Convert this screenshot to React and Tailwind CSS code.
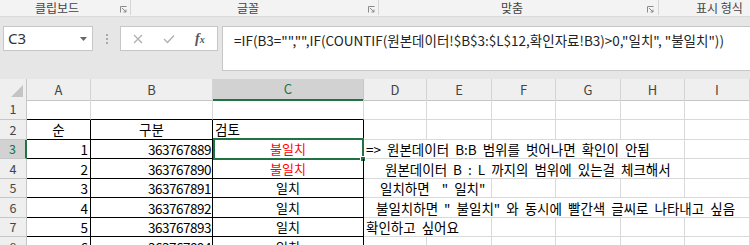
import React from "react";

const FONT = { fontFamily: '"Noto Sans CJK KR", "Noto Sans", sans-serif' };

function Launcher() {
  return (
    <svg width="7" height="7" viewBox="0 0 7 7" className="block">
      <path d="M0.5 6.5 V0.5 H6.5" fill="none" stroke="#8a8a8a" strokeWidth="1" />
      <path d="M2 2 L6 6 M3.5 6 H6 V3.5" fill="none" stroke="#8a8a8a" strokeWidth="1" />
    </svg>
  );
}

const GRID = "grid grid-cols-[27px_64px_122px_151px_63px_65px_64px_65px_64px_1fr]";

const gl = "border-r border-b border-[#d9d9d9]";

function RowHead({ n, sel, h }) {
  return (
    <div
      className={
        sel
          ? "flex items-center justify-center bg-[#d2d2d2] text-[#217346] border-r-2 border-r-[#217346] border-b border-b-[#c6c6c6] text-[12.5px]"
          : "flex items-center justify-center bg-[#efefef] text-[#444] border-r border-b border-[#c6c6c6] text-[12.5px]"
      }
      style={{ height: h }}
    >
      {n}
    </div>
  );
}

export default function App() {
  const rows = [
    { n: 3, a: "1", b: "363767889", c: "불일치", red: true, h: 19 },
    { n: 4, a: "2", b: "363767890", c: "불일치", red: true, h: 20 },
    { n: 5, a: "3", b: "363767891", c: "일치", h: 19 },
    { n: 6, a: "4", b: "363767892", c: "일치", h: 20 },
    { n: 7, a: "5", b: "363767893", c: "일치", h: 19 },
    { n: 8, a: "6", b: "363767894", c: "일치", h: 20 },
  ];
  const notes = {
    3: { text: "=> 원본데이터 B:B 범위를 벗어나면 확인이 안됨", span: "col-span-5", pl: "pl-[2px]", rest: 1 },
    4: { text: "원본데이터 B : L 까지의 범위에 있는걸 체크해서", span: "col-span-5", pl: "pl-[21px]", rest: 1 },
    5: { text: "일치하면  \" 일치\"", span: "col-span-2", pl: "pl-[16px]", rest: 4 },
    6: { text: "불일치하면 \" 불일치\" 와 동시에 빨간색 글씨로 나타내고 싶음", span: "col-span-6", pl: "pl-[12px]", rest: 0 },
    7: { text: "확인하고 싶어요", span: "col-span-2", pl: "pl-[2px]", rest: 4 },
  };

  return (
    <div className="w-[750px] h-[245px] overflow-hidden bg-white" style={FONT}>
      {/* Ribbon group labels */}
      <div className="flex h-[17px] bg-[#f3f3f3] border-b border-[#dadada] text-[12px] text-[#444] leading-[15px]">
        <div className="w-[131px] flex items-start border-r border-[#d5d5d5] h-[15px]">
          <span className="ml-[35px]">클립보드</span>
          <span className="ml-auto mr-[3px] mt-[6px]"><Launcher /></span>
        </div>
        <div className="w-[248px] flex items-start border-r border-[#d5d5d5] h-[15px]">
          <span className="ml-[106px]">글꼴</span>
          <span className="ml-auto mr-[3px] mt-[6px]"><Launcher /></span>
        </div>
        <div className="w-[280px] flex items-start border-r border-[#d5d5d5] h-[15px]">
          <span className="ml-[122px]">맞춤</span>
          <span className="ml-auto mr-[4px] mt-[6px]"><Launcher /></span>
        </div>
        <div className="flex-1 flex items-start h-[15px]">
          <span className="ml-[37px]">표시 형식</span>
        </div>
      </div>

      {/* Formula bar area */}
      <div className="h-[62px] bg-[#e6e6e6] flex items-start pt-[9px]">
        <div className="ml-[3px] w-[90px] h-[25px] bg-white border border-[#c6c6c6] flex items-center pl-[4px] pr-[5px]">
          <span className="text-[15px] text-[#333]" style={{ fontFamily: '"Noto Sans", sans-serif' }}>C3</span>
          <svg width="7" height="4" viewBox="0 0 7 4" className="ml-auto">
            <path d="M0 0 H7 L3.5 4 Z" fill="#666" />
          </svg>
        </div>
        <div className="w-[27px] h-[25px] flex flex-col items-center justify-center gap-[2px]">
          <span className="w-[2px] h-[2px] bg-[#a8a8a8]"></span>
          <span className="w-[2px] h-[2px] bg-[#a8a8a8]"></span>
          <span className="w-[2px] h-[2px] bg-[#a8a8a8]"></span>
        </div>
        <div className="w-[98px] h-[25px] bg-white border border-[#c6c6c6] flex items-center">
          <svg width="10" height="10" viewBox="0 0 10 10" className="ml-[12px]">
            <path d="M1 1 L9 9 M9 1 L1 9" stroke="#b0b0b0" strokeWidth="1.3" />
          </svg>
          <svg width="12" height="10" viewBox="0 0 12 10" className="ml-[20px]">
            <path d="M1 5 L4.5 8.5 L11 1.5" fill="none" stroke="#b0b0b0" strokeWidth="1.4" />
          </svg>
          <span
            className="ml-[20px] text-[14px] italic font-bold text-[#555] leading-none"
            style={{ fontFamily: '"Liberation Serif", serif' }}
          >
            f<span className="text-[10px]">x</span>
          </span>
        </div>
        <div className="ml-[4px] flex-1 h-[45px] bg-white border border-r-0 border-[#c6c6c6] pl-[11px] pt-[3px] text-[13.5px] text-[#222] whitespace-nowrap">
          =IF(B3="","",IF(COUNTIF(원본데이터!$B$3:$L$12,확인자료!B3)&gt;0,"일치", "불일치"))
        </div>
      </div>

      {/* Column headers */}
      <div className={GRID + " h-[21px] text-[13px] text-[#444]"}>
        <div className="bg-[#efefef] border-r border-b border-[#c6c6c6] flex items-end justify-end p-[3px]">
          <svg width="12" height="12" viewBox="0 0 12 12"><path d="M12 0 V12 H0 Z" fill="#c4c4c4" /></svg>
        </div>
        {["A", "B"].map((c) => (
          <div key={c} className="bg-[#efefef] border-r border-b border-[#d4d4d4] border-b-[#c6c6c6] flex items-center justify-center">{c}</div>
        ))}
        <div className="bg-[#d2d2d2] border-r border-[#c6c6c6] border-b-2 border-b-[#217346] text-[#217346] flex items-center justify-center">C</div>
        {["D", "E", "F", "G", "H", "I"].map((c) => (
          <div key={c} className="bg-[#efefef] border-r border-b border-[#d4d4d4] border-b-[#c6c6c6] flex items-center justify-center">{c}</div>
        ))}
      </div>

      {/* Row 1 */}
      <div className={GRID + " text-[13.5px] text-black"}>
        <RowHead n={1} h={20} />
        <div className="border-r border-[#d9d9d9] border-b border-b-black"></div>
        <div className="border-r border-[#d9d9d9] border-b border-b-black"></div>
        <div className="border-r border-[#d9d9d9] border-b border-b-black"></div>
        {[0, 1, 2, 3, 4, 5].map((i) => <div key={i} className={gl}></div>)}
      </div>

      {/* Row 2 */}
      <div className={GRID + " text-[13.5px] text-black leading-[19px]"}>
        <RowHead n={2} h={20} />
        <div className="border-r border-b border-black flex items-end justify-center">순</div>
        <div className="border-r border-b border-black flex items-end justify-center">구분</div>
        <div className="border-r border-b border-black flex items-end pl-[2px]">검토</div>
        {[0, 1, 2, 3, 4, 5].map((i) => <div key={i} className={gl}></div>)}
      </div>

      {rows.map((r) => {
        const note = notes[r.n];
        return (
          <div key={r.n} className={GRID + " text-[13.5px] text-black leading-[18px]"}>
            <RowHead n={r.n} h={r.h} sel={r.n === 3} />
            <div className="border-r border-b border-black flex items-end justify-end pr-[2px]">{r.a}</div>
            <div className="border-r border-b border-black flex items-end justify-end pr-[1px] tracking-[-0.5px]">{r.b}</div>
            <div className={"relative border-r border-b border-black flex items-end justify-center text-[13px] " + (r.red ? "text-[#ff0000]" : "")}>
              {r.c}
              {r.n === 3 && (
                <>
                  <div className="absolute left-0 right-[-1px] top-[-2px] bottom-[-2px] border-2 border-[#217346] pointer-events-none"></div>
                  <div className="absolute right-[-3px] bottom-[-4px] w-[6px] h-[6px] bg-[#217346] border border-white"></div>
                </>
              )}
            </div>
            {note ? (
              <>
                <div className={note.span + " " + gl + " flex items-end whitespace-pre [word-spacing:3px] " + note.pl}>{note.text}</div>
                {Array.from({ length: note.rest }).map((_, i) => <div key={i} className={gl}></div>)}
              </>
            ) : (
              [0, 1, 2, 3, 4, 5].map((i) => <div key={i} className={gl}></div>)
            )}
          </div>
        );
      })}
    </div>
  );
}
